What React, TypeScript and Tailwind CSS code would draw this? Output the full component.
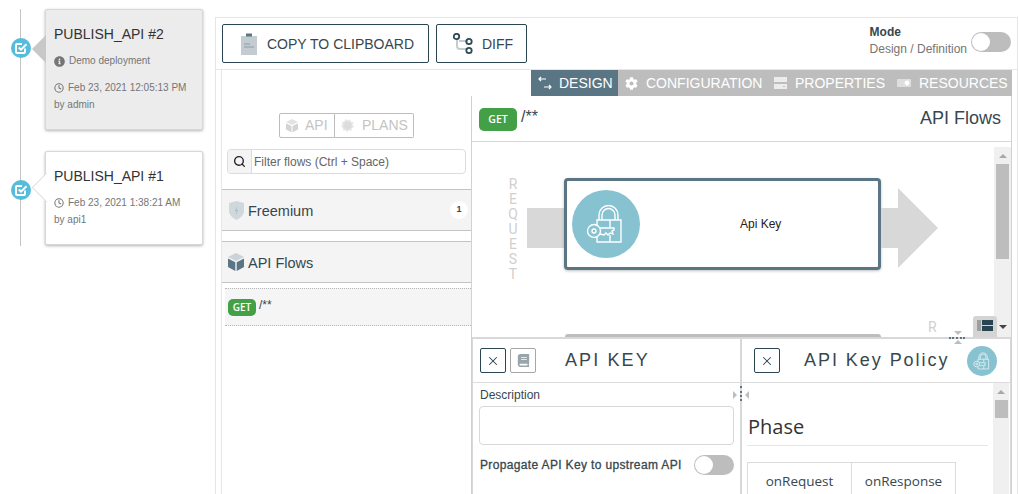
import React from "react";
import { Clock, Search, X } from "lucide-react";
import { FaBook, FaCog, FaInfoCircle } from "react-icons/fa";

const LockKeyIcon = ({ size, className }: { size: number; className?: string }) => (
  <svg width={size} height={size} viewBox="0 0 68 68" fill="none" stroke="white" strokeWidth="1.4" className={className}>
    <path d="M27 30v-5a9.5 9.5 0 0 1 19 0v5" />
    <path d="M30 30v-5a6.5 6.5 0 0 1 13 0v5" />
    <path d="M25 36v-6h24v22H25v-5" />
    <path d="M38 30v7M38 45v7" />
    <circle cx="22" cy="41" r="6.5" />
    <circle cx="22" cy="41" r="2" />
    <path d="M28 38h14v2l-2 1 1 3-3-1-2 2-2-2-2 2-4-1" />
  </svg>
);

const CubeIcon = ({ top, side, size = 16 }: { top: string; side: string; size?: number }) => (
  <svg width={size} height={size * 1.125} viewBox="0 0 16 18">
    <path d="M8 0l8 4-8 4-8-4z" fill={top} />
    <path d="M0 5.5l7.3 3.7V18L0 14zM16 5.5L8.7 9.2V18l7.3-4z" fill={side} />
  </svg>
);

const TimelineCard = ({
  title,
  note,
  date,
  by,
  active,
  height,
}: {
  title: string;
  note?: string;
  date: string;
  by: string;
  active?: boolean;
  height: string;
}) => (
  <div className={`relative ml-[45px] w-[158px] rounded-[2px] border border-[#d8d8d8] px-2 shadow-[0_1px_3px_rgba(0,0,0,0.3)] ${active ? "bg-[#ececec]" : "bg-white"} ${height}`}>
    <div className="mt-[14px] text-[14px] leading-[20px] text-[#333]">{title}</div>
    {note && (
      <div className="mt-[10px] flex items-center gap-[4px] text-[10px] leading-[14px] text-[#757575]">
        <FaInfoCircle className="size-[11px]" />
        {note}
      </div>
    )}
    <div className={`${note ? "mt-[13px]" : "mt-[10px]"} flex items-center gap-[4px] text-[10px] leading-[14px] text-[#757575]`}>
      <Clock className="size-[10px]" strokeWidth={2.5} />
      {date}
    </div>
    <div className="mt-[3px] text-[10px] leading-[14px] text-[#757575]">{by}</div>
    {active ? (
      <div className="absolute -left-[14px] top-[25px] h-0 w-0 border-y-[14px] border-r-[14px] border-y-transparent border-r-[#c8c8c8]" />
    ) : (
      <div className="absolute -left-[14px] top-[25px] size-[21px] translate-x-[4px] rotate-45 border-b border-l border-[#dedede] bg-white" />
    )}
    <div className="absolute -left-[35px] top-[28px] flex size-[20px] items-center justify-center rounded-full bg-[#55bcdc]">
      <svg width="14" height="14" viewBox="0 0 14 14" fill="none" stroke="white" strokeWidth="2">
        <path d="M11 7.5V11a1 1 0 0 1-1 1H3a1 1 0 0 1-1-1V4a1 1 0 0 1 1-1h5" />
        <path d="M4.8 6.5l2.2 2.2 5.5-5.5" />
      </svg>
    </div>
  </div>
);

const Toggle = () => (
  <div className="flex h-[20px] w-[40px] items-center rounded-full bg-[#bdbdbd] pl-[1px]">
    <div className="size-[18px] rounded-full bg-white" />
  </div>
);

const GetBadge = ({ big }: { big?: boolean }) => (
  <span
    className={`flex items-center justify-center bg-[#43a047] font-['Open_Sans'] font-semibold text-white ${
      big ? "mt-[2px] h-[23px] w-[38px] rounded-[5px] text-[10.5px]" : "h-[17px] w-[28px] rounded-[5px] text-[10px]"
    }`}
  >
    GET
  </span>
);

const FlowGroup = ({ icon, label, badge }: { icon: React.ReactNode; label: string; badge?: string }) => (
  <div className="flex h-[42px] items-center border-y border-[#c4c4c4] bg-[#f4f4f4] pl-[6px] pr-[3px]">
    <div className="flex w-[16px] justify-center">{icon}</div>
    <span className="ml-[4px] pt-[3px] text-[14.5px] text-[#37474f]">{label}</span>
    {badge && (
      <span className="ml-auto flex size-[18px] items-center justify-center rounded-full bg-white text-[9px] font-bold text-[#37474f]">
        {badge}
      </span>
    )}
  </div>
);

const Tab = ({ icon, label, active, width }: { icon: React.ReactNode; label: string; active?: boolean; width: string }) => (
  <div className={`flex h-full items-center ${active ? "gap-[7px] bg-[#5a7684]" : "gap-[8px]"} pl-[7px] text-[14px] text-white ${width}`}>
    {icon}
    {label}
  </div>
);

const SquareButton = ({ children, dim }: { children: React.ReactNode; dim?: boolean }) => (
  <div className={`flex h-[25px] w-[26px] items-center justify-center rounded-[2px] border ${dim ? "border-[#a6a6a6] text-[#9aa5ab]" : "border-[#2a4552] text-[#2a4552]"}`}>
    {children}
  </div>
);

export default function App() {
  return (
    <div className="flex h-[494px] w-[1019px] overflow-hidden bg-white font-['Liberation_Sans',Arial,sans-serif]">
      <aside className="relative w-[215px] shrink-0 pt-[9px]">
        <div className="absolute left-[20px] top-[9px] h-[237px] w-px bg-[#c4c4c4]" />
        <TimelineCard title="PUBLISH_API #2" note="Demo deployment" date="Feb 23, 2021 12:05:13 PM" by="by admin" active height="h-[121px]" />
        <div className="h-[21px]" />
        <TimelineCard title="PUBLISH_API #1" date="Feb 23, 2021 1:38:21 AM" by="by api1" height="h-[94px]" />
      </aside>

      <main className="mr-px mt-[17px] flex min-w-0 flex-1 flex-col border-x border-t border-[#e6e6e6]">
        <div className="flex h-[52px] shrink-0 items-center border-b border-[#e6e6e6] pl-[6px] pr-[6px]">
          <div className="flex h-[39px] w-[207px] items-center rounded-[2px] border border-[#2a4552] pl-[18px] text-[14px] text-[#37474f]">
            <svg width="16" height="22" viewBox="0 0 16 22">
              <path d="M0 3h5V1h6v2h5v19H0z" fill="#c3cdd1" />
              <path d="M5 0.5h6V3.5H5z" fill="#5a7684" />
              <path d="M3 11h6M3 14h10" stroke="#8b9ba3" strokeWidth="1" />
            </svg>
            <span className="ml-[10px] pt-[2px]">COPY TO CLIPBOARD</span>
          </div>
          <div className="ml-[7px] flex h-[39px] w-[91px] items-center rounded-[2px] border border-[#2a4552] pl-[16px] text-[14px] text-[#37474f]">
            <svg width="20" height="22" viewBox="0 0 20 22" fill="none">
              <path d="M4 6v7a3 3 0 0 0 3 3h8M6 8h9" stroke="#c3cdd1" strokeWidth="2" />
              <circle cx="3.5" cy="3.5" r="2.7" stroke="#2f4b58" strokeWidth="1.8" />
              <circle cx="16" cy="8.5" r="2.7" stroke="#2f4b58" strokeWidth="1.8" />
              <circle cx="16" cy="17.5" r="2.7" stroke="#2f4b58" strokeWidth="1.8" />
            </svg>
            <span className="ml-[9px] pt-[2px]">DIFF</span>
          </div>
          <div className="-mt-[6px] ml-auto flex items-center gap-[4px]">
            <div className="text-[12px] leading-[17px] text-[#757575]">
              <div className="font-bold text-[#37474f]">Mode</div>
              <div>Design / Definition</div>
            </div>
            <div className="mt-[3px]">
              <Toggle />
            </div>
          </div>
        </div>

        <div className="flex min-h-0 flex-1 flex-col pl-[5px] pr-[5px]">
          <div className="flex h-[26px] shrink-0 justify-end border-l border-[#e6e6e6]">
            <div className="flex h-full w-[481px] items-center bg-[#bdbdbd]">
              <Tab
                active
                width="w-[87px]"
                label="DESIGN"
                icon={
                  <svg width="14" height="16" viewBox="0 0 14 16" fill="none" stroke="white" strokeWidth="1.2">
                    <path d="M1 4h7M3 2L1 4l2 2M13 12H6M11 10l2 2-2 2" />
                  </svg>
                }
              />
              <Tab width="w-[149px]" label="CONFIGURATION" icon={<FaCog className="size-[13px]" />} />
              <Tab
                width="w-[123px]"
                label="PROPERTIES"
                icon={
                  <svg width="13" height="12" viewBox="0 0 13 12" fill="#ececec">
                    <path d="M0 0h13v5H0zM0 7h13v5H0z" />
                    <path d="M9 9h2v1H9z" fill="#bdbdbd" />
                  </svg>
                }
              />
              <Tab
                width="w-[122px]"
                label="RESOURCES"
                icon={
                  <svg width="14" height="8" viewBox="0 0 14 8">
                    <rect width="14" height="8" rx="1" fill="#dedede" />
                    <circle cx="10" cy="4" r="2.4" fill="white" />
                  </svg>
                }
              />
            </div>
          </div>

          <div className="flex min-h-0 flex-1 border-l border-[#e6e6e6]">
            <div className="flex w-[249px] shrink-0 flex-col">
              <div className="mt-[17px] flex justify-center">
                <div className="flex h-[25px] w-[135px] text-[14px] text-[#c4c4c4]">
                  <div className="flex w-[56px] items-center gap-[7px] rounded-l-[2px] border border-[#bdbdbd] pl-[6px]">
                    <CubeIcon top="#e2e2e2" side="#d4d4d4" size={12} />
                    API
                  </div>
                  <div className="flex flex-1 items-center gap-[8px] rounded-r-[2px] border-y border-r border-[#bdbdbd] pl-[6px]">
                    <svg width="13" height="13" viewBox="0 0 13 13">
                      <circle cx="6.5" cy="6.5" r="5" fill="#dcdcdc" stroke="#e6e6e6" strokeWidth="2.4" strokeDasharray="2 1.4" />
                    </svg>
                    PLANS
                  </div>
                </div>
              </div>
              <div className="ml-[5px] mt-[11px] flex h-[25px] w-[239px] items-center rounded-[4px] border border-[#dcdcdc] text-[12px] text-[#666]">
                <div className="flex h-full w-[24px] items-center justify-center rounded-l-[4px] border-r border-[#dcdcdc] bg-[#f4f4f4]">
                  <Search className="size-[13px] text-[#222]" strokeWidth={2.5} />
                </div>
                <span className="ml-[2px]">Filter flows (Ctrl + Space)</span>
              </div>
              <div className="mt-[15px]">
                <FlowGroup
                  label="Freemium"
                  badge="1"
                  icon={
                    <svg width="15" height="19" viewBox="0 0 15 19">
                      <path d="M7.5 0L15 2v8c0 4-3.5 7-7.5 9C3.5 17 0 14 0 10V2z" fill="#cfd8dc" />
                      <path d="M8.5 5L5.5 10h2l-1 4 3-5h-2z" fill="#b0bec5" />
                    </svg>
                  }
                />
              </div>
              <div className="mt-[10px]">
                <FlowGroup label="API Flows" icon={<CubeIcon top="#c9d3d8" side="#5a7684" />} />
              </div>
              <div className="ml-[3px] mt-[5px] flex h-[38px] items-center gap-[3px] border-y border-dotted border-[#b5b5b5] bg-[#f5f5f5] pl-[3px] text-[12px] text-[#37474f]">
                <GetBadge />
                <span className="-mt-[4px]">/**</span>
              </div>
            </div>

            <div className="flex min-w-0 flex-1 flex-col border-l border-r border-[#d2d2d2]">
              <div className="flex h-[46px] shrink-0 items-center border-b border-[#d8d8d8] pl-[7px] pr-[10px]">
                <GetBadge big />
                <span className="ml-[4px] -mt-[4px] text-[16px] text-[#37474f]">/**</span>
                <span className="ml-auto text-[18px] text-[#37474f]">API Flows</span>
              </div>

              <div className="relative flex h-[195px] shrink-0 overflow-hidden pt-[36px]">
                <div className="ml-[36px] mt-[-1px] flex w-[10px] flex-col items-center font-['Roboto'] text-[14px] leading-[15px] text-[#d0d0d0]">
                  {"REQUEST".split("").map((c, i) => (
                    <span key={i}>{c}</span>
                  ))}
                </div>
                <div className="ml-[9px] mt-[30px] h-[40px] w-[37px] bg-[#d8d8d8]" />
                <div className="flex h-[92px] w-[317px] items-center rounded-[4px] border-[3px] border-[#5a7684] bg-white shadow-[0_1px_3px_rgba(0,0,0,0.25)]">
                  <div className="ml-[5px] flex size-[68px] items-center justify-center rounded-full bg-[#87c2d1]">
                    <LockKeyIcon size={68} />
                  </div>
                  <span className="ml-[100px] text-[12px] text-[#222]">Api Key</span>
                </div>
                <div className="mt-[30px] h-[40px] w-[17px] bg-[#d8d8d8]" />
                <div className="mt-[10px] h-0 w-0 border-y-[40px] border-l-[40px] border-y-transparent border-l-[#d8d8d8]" />
                <div className="absolute bottom-0 left-[93px] h-[3px] w-[316px] rounded-t-[3px] bg-[#bdbdbd]" />
                <span className="absolute bottom-[2px] left-[456px] font-['Roboto'] text-[14px] leading-[15px] text-[#d0d0d0]">R</span>
                <div className="absolute right-0 top-[5px] flex h-[190px] w-[17px] flex-col items-center bg-[#f0f0f0]">
                  <div className="mt-[7px] h-0 w-0 border-x-[4px] border-b-[4px] border-x-transparent border-b-[#a8a8a8]" />
                  <div className="mt-[6px] h-[95px] w-[13px] bg-[#bdbdbd]" />
                  <div className="mb-[8px] mt-auto h-0 w-0 border-x-[4px] border-t-[4px] border-x-transparent border-t-[#444]" />
                </div>
                <div className="absolute bottom-0 left-[501px] flex h-[21px] w-[24px] items-start justify-center gap-[1px] rounded-t-[3px] bg-[#d4d4d4] pt-[4px]">
                  <div className="h-[11px] w-[4px] bg-[#9e9e9e]" />
                  <div className="flex flex-col gap-[1px]">
                    <div className="h-[5px] w-[11px] bg-[#2a4552]" />
                    <div className="h-[5px] w-[11px] bg-[#2a4552]" />
                  </div>
                </div>
              </div>

              <div className="relative flex min-h-0 flex-1 border-t-2 border-[#d8d8d8]">
                {/* resize handles */}
                <div className="absolute -top-[8px] left-[482px] z-10 h-0 w-0 border-x-[4px] border-t-[4px] border-x-transparent border-t-[#bdbdbd]" />
                <div className="absolute -top-[2px] left-[477px] z-10 h-[2px] w-[16px] border-t-2 border-dotted border-[#5a7684]" />
                <div className="absolute left-[482px] top-[1px] z-10 h-0 w-0 border-x-[4px] border-b-[4px] border-x-transparent border-b-[#bdbdbd]" />
                <div className="absolute left-[261px] top-[52px] z-10 h-0 w-0 border-y-[4px] border-l-[4px] border-y-transparent border-l-[#bdbdbd]" />
                <div className="absolute left-[268px] top-[47px] z-10 h-[15px] w-[2px] border-l-2 border-dotted border-[#5a7684]" />
                <div className="absolute left-[273px] top-[52px] z-10 h-0 w-0 border-y-[4px] border-r-[4px] border-y-transparent border-r-[#bdbdbd]" />

                <section className="w-[270px] shrink-0 border-l border-r-2 border-[#d8d8d8]">
                  <div className="flex h-[44px] items-center gap-[4px] border-b border-[#dcdcdc] pl-[7px]">
                    <SquareButton><X className="size-[14px]" strokeWidth={1.8} /></SquareButton>
                    <SquareButton dim><FaBook className="size-[13px]" /></SquareButton>
                    <span className="ml-[25px] text-[18px] tracking-[2.1px] text-[#37474f]">API KEY</span>
                  </div>
                  <div className="pl-[6px] pr-[6px] pt-[5px]">
                    <div className="pl-[1px] text-[12px] leading-[15px] text-[#37474f]">Description</div>
                    <div className="mt-[3px] h-[39px] rounded-[4px] border border-[#d8d8d8]" />
                    <div className="mt-[10px] flex items-center justify-between pl-[1px] text-[12px] text-[#37474f]">
                      <span className="tracking-[0.35px] [-webkit-text-stroke:0.3px_#37474f]">Propagate API Key to upstream API</span>
                      <Toggle />
                    </div>
                  </div>
                </section>
                <section className="min-w-0 flex-1 border-r border-[#d8d8d8]">
                  <div className="flex h-[44px] items-center border-b border-[#dcdcdc] pl-[12px]">
                    <SquareButton><X className="size-[14px]" strokeWidth={1.8} /></SquareButton>
                    <span className="ml-[24px] text-[18px] tracking-[1.95px] text-[#37474f]">API Key Policy</span>
                    <div className="ml-[18px] flex size-[30px] items-center justify-center rounded-full bg-[#87c2d1]">
                      <LockKeyIcon size={30} />
                    </div>
                  </div>
                  <div className="flex">
                    <div className="min-w-0 flex-1 pl-[5px] pr-[5px] pt-[30px]">
                      <div className="border-b border-[#e6e6e6] pb-[4px] pl-[1px] font-['Open_Sans'] text-[20px] font-medium leading-[28px] text-[#333]">Phase</div>
                      <div className="mt-[16px] flex h-[40px] w-[209px] border border-b-0 border-[#dcdcdc] font-['Open_Sans'] text-[13.5px] text-[#37474f]">
                        <div className="flex w-[104px] items-start justify-center border-r border-[#dcdcdc] pt-[8px]">onRequest</div>
                        <div className="flex flex-1 items-start justify-center pt-[8px]">onResponse</div>
                      </div>
                    </div>
                    <div className="mr-px flex h-[111px] w-[16px] shrink-0 flex-col items-center bg-[#f0f0f0]">
                      <div className="mt-[7px] h-0 w-0 border-x-[4px] border-b-[4px] border-x-transparent border-b-[#a8a8a8]" />
                      <div className="mt-[6px] h-[18px] w-[13px] bg-[#bdbdbd]" />
                    </div>
                  </div>
                </section>
              </div>
            </div>
          </div>
        </div>
      </main>
    </div>
  );
}
